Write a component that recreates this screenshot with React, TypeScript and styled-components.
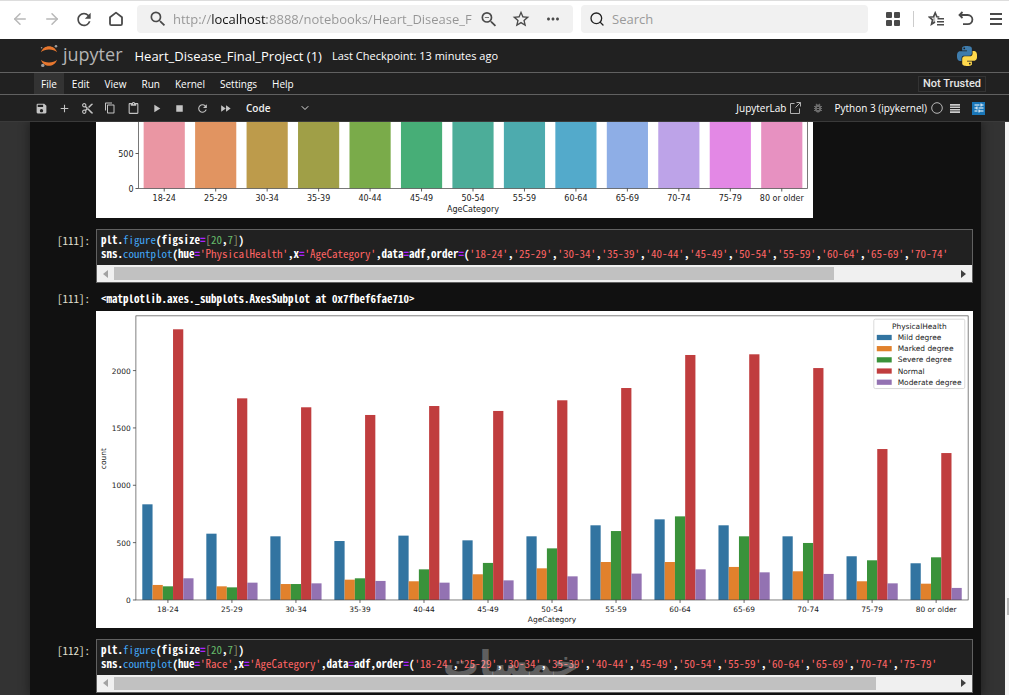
import React from "react";
import styled, { createGlobalStyle } from "styled-components";
import {
  MdAdd,
  MdBugReport,
  MdContentCopy,
  MdContentCut,
  MdContentPaste,
  MdFastForward,
  MdMoreHoriz,
  MdPlayArrow,
  MdRefresh,
  MdSave,
  MdSearch,
  MdStarOutline,
  MdStop,
  MdTune,
  MdZoomOut,
} from "react-icons/md";
import { ArrowLeft, ArrowRight, ChevronDown, Search } from "lucide-react";

const ui = `"Open Sans", "Noto Sans", sans-serif`;
const mono = `"Noto Sans Mono CJK SC", "Liberation Mono", monospace`;

const GlobalStyle = createGlobalStyle`
  *, *::before, *::after { box-sizing: border-box; }
  body { margin: 0; background: #111111; font-family: ${ui}; }
  button, input, select { font-family: inherit; margin: 0; }
`;

const Page = styled.div`
  display: flex;
  flex-direction: column;
  height: 100vh;
  overflow: hidden;
`;

/* Browser bar */

const BrowserBar = styled.header`
  display: flex;
  align-items: center;
  flex: none;
  height: 39px;
  padding: 0 3px 2px 10px;
  background: #ffffff;
  border-top: 1px solid #dddddd;
`;

const IconButton = styled.button<{ $color?: string; $width?: number }>`
  display: flex;
  flex: none;
  align-items: center;
  justify-content: center;
  width: ${(p) => p.$width ?? 20}px;
  height: 20px;
  padding: 0;
  border: 0;
  background: none;
  color: ${(p) => p.$color ?? "#4a4a4a"};
`;

const NavButtons = styled.nav`
  display: flex;
  gap: 12px;
  margin-right: 11px;
`;

const AddressBox = styled.div`
  display: flex;
  flex: 415 1 0;
  align-items: center;
  gap: 12px;
  height: 28px;
  min-width: 0;
  padding: 0 10px 0 11px;
  border-radius: 4px;
  background: #f1f1f1;
`;

const AddressInput = styled.input`
  flex: 1;
  min-width: 0;
  margin-left: -7px;
  margin-right: -6px;
  padding: 0;
  border: 0;
  font-size: 13px;
  font-weight: 400;
  line-height: 20px;
  color: transparent;
  background: linear-gradient(90deg, #949494 0 39px, #111111 39px 94px, #949494 94px);
  -webkit-background-clip: text;
  background-clip: text;
`;

const SearchBox = styled.label`
  display: flex;
  flex: 271 1 0;
  align-items: center;
  gap: 7px;
  height: 28px;
  min-width: 0;
  margin-left: 8px;
  padding: 0 8px;
  border-radius: 4px;
  background: #f1f1f1;
  color: #222222;
`;

const SearchInput = styled.input`
  flex: 1;
  min-width: 0;
  padding: 0;
  border: 0;
  background: none;
  font-size: 13px;
  line-height: 20px;
  &::placeholder { color: #9a9a9a; }
`;

const BrowserTools = styled.div`
  display: flex;
  align-items: center;
  gap: 10px;
  margin-left: 15px;
`;

const Divider = styled.span`
  width: 1px;
  height: 16px;
  margin: 0 2px 0 0;
  background: #cccccc;
`;

/* Jupyter header */

const TitleBar = styled.div`
  display: flex;
  flex: none;
  align-items: center;
  height: 34px;
  padding: 0 32px 0 39px;
  background: #212121;
  border-bottom: 1px solid #616161;
  color: #ffffff;
`;

const Brand = styled.a`
  display: flex;
  align-items: center;
  gap: 4px;
  margin-right: 12px;
  color: #b4b4b4;
  text-decoration: none;
`;

const BrandName = styled.span`
  font-size: 18px;
  line-height: 24px;
  margin-bottom: 4px;
`;

const NotebookName = styled.h1`
  margin: 0 10px 0 0;
  font-size: 13px;
  font-weight: 500;
  line-height: 20px;
`;

const Checkpoint = styled.span`
  flex: 1;
  font-size: 11px;
  font-weight: 400;
  line-height: 20px;
`;

const MenuBar = styled.nav`
  display: flex;
  flex: none;
  align-items: center;
  gap: 1px;
  height: 22px;
  padding: 0 23px 0 34px;
  background: #212121;
  border-bottom: 1px solid #616161;
`;

const MenuItem = styled.button<{ $active?: boolean }>`
  height: 21px;
  padding: 0 7px;
  border: 0;
  background: ${(p) => (p.$active ? "#333333" : "none")};
  color: #ffffff;
  font-size: 10px;
  font-weight: 400;
  line-height: 20px;
`;

const TrustButton = styled.button`
  height: 16px;
  margin-left: auto;
  padding: 0 4px;
  border: 1px solid #333333;
  background: none;
  color: #e6e6e6;
  font-family: Roboto, sans-serif;
  font-size: 11px;
  font-weight: 500;
  line-height: 14px;
`;

const ToolBar = styled.div`
  display: flex;
  flex: none;
  align-items: center;
  height: 27px;
  padding: 0 24px 0 31px;
  background: #212121;
  border-bottom: 1px solid #3a3a3a;
  color: #e0e0e0;
`;

const ToolGroup = styled.div`
  display: flex;
  align-items: center;
  gap: 3px;
`;

const CellTypePicker = styled.label`
  display: flex;
  align-items: center;
  margin-left: 11px;
`;

const CellTypeSelect = styled.select`
  appearance: none;
  width: 53px;
  padding: 0;
  border: 0;
  background: none;
  color: #f0f0f0;
  font-size: 10px;
  font-weight: 600;
  line-height: 16px;
`;

const KernelGroup = styled.div`
  display: flex;
  align-items: center;
  margin-left: auto;
`;

const TextButton = styled.button`
  display: flex;
  align-items: center;
  gap: 4px;
  padding: 0;
  border: 0;
  background: none;
  color: #ffffff;
  font-size: 10px;
  font-weight: 500;
  line-height: 16px;
`;

const InspectorButton = styled.button`
  display: flex;
  align-items: center;
  justify-content: center;
  width: 13px;
  height: 13px;
  margin-left: 5px;
  padding: 0;
  border: 0;
  background: #1976b8;
  color: #ffffff;
`;

/* Notebook */

const Workspace = styled.main`
  display: flex;
  flex: 1;
  min-height: 0;
  padding-left: 30px;
  background: #333333;
  overflow: hidden;
`;

const Paper = styled.div`
  flex: 1;
  min-width: 0;
  padding-right: 8px;
  background: #111111;
  box-shadow: 0 0 10px 1px rgba(0, 0, 0, 0.4);
`;

const PageScroll = styled.div`
  display: flex;
  flex: none;
  justify-content: flex-end;
  align-items: flex-end;
  width: 4px;
  margin-left: 24px;
  padding-bottom: 80px;
  background: #f4f4f4;
`;

const PageThumb = styled.span`
  width: 2px;
  height: 17px;
  background: #b8b8b8;
`;

const CellRow = styled.section<{ $gap: number }>`
  display: grid;
  grid-template-columns: 60px minmax(0, 1fr);
  column-gap: 6px;
  margin-bottom: ${(p) => p.$gap}px;
`;

const Prompt = styled.div`
  padding-top: 4px;
  color: #e0e0d0;
  font-family: ${mono};
  font-size: 11px;
  line-height: 14px;
  text-align: right;
  white-space: pre;
`;

const Editor = styled.div`
  position: relative;
  border: 1px solid #616161;
  background: #212121;
`;

const CodeView = styled.pre`
  margin: 0;
  padding: 2px 0 5px 4px;
  overflow: hidden;
  color: #ffffff;
  font-family: ${mono};
  font-size: 11px;
  font-weight: 700;
  line-height: 14px;
`;

const tokenColors = {
  fn: "#42a5f5",
  op: "#aa22ff",
  num: "#66bb6a",
  str: "#ff6464",
  br: "#9a9a78",
};

const Token = styled.span<{ $kind: keyof typeof tokenColors }>`
  color: ${(p) => tokenColors[p.$kind]};
  font-weight: ${(p) => (p.$kind === "op" ? 700 : 400)};
`;

const ScrollTrack = styled.div`
  display: flex;
  align-items: center;
  justify-content: space-between;
  height: 17px;
  padding: 0 6px;
  background: #f0f0f0;
`;

const ThumbLane = styled.div`
  flex: 1;
  height: 13px;
  margin: 0 5px 0 6px;
`;

const ScrollThumb = styled.div`
  height: 13px;
  background: #c1c1c1;
`;

const OutputRow = styled.div`
  display: grid;
  grid-template-columns: 60px minmax(0, 1fr);
  column-gap: 6px;
`;

const OutputText = styled.pre`
  margin: 0;
  padding: 4px 0 6px 5px;
  color: #ffffff;
  font-family: ${mono};
  font-size: 11px;
  font-weight: 700;
  line-height: 14px;
`;

const Cell = styled.div`
  margin-bottom: 11px;
`;

const FigureOutput = styled.div`
  padding-left: 66px;
`;

const Figure = styled.svg<{ $max?: number }>`
  display: block;
  width: 100%;
  max-width: ${(p) => (p.$max ? `${p.$max}px` : "none")};
  height: auto;
  background: #ffffff;
  font-family: "DejaVu Sans", sans-serif;
`;

const Watermark = styled.span`
  position: absolute;
  top: 8px;
  left: 346px;
  height: 27px;
  overflow: hidden;
  color: rgba(255, 255, 255, 0.3);
  font-family: "DejaVu Sans", sans-serif;
  font-size: 36px;
  font-weight: 700;
  line-height: 32px;
`;

/* Data */

const ages = [
  "18-24", "25-29", "30-34", "35-39", "40-44", "45-49", "50-54",
  "55-59", "60-64", "65-69", "70-74", "75-79", "80 or older",
];

const ageColors = [
  "#ea96a3", "#e19461", "#bd9b4b", "#a09f47", "#7aab4a", "#47ae77", "#4cad99",
  "#4dabae", "#53aacb", "#8eaee6", "#bda3e8", "#e388e5", "#e791c1",
];

const health = [
  { name: "Mild degree", color: "#3274a1", counts: [834, 578, 555, 514, 561, 520, 555, 651, 703, 651, 555, 381, 320] },
  { name: "Marked degree", color: "#e1812c", counts: [131, 119, 139, 177, 163, 224, 276, 331, 331, 288, 250, 163, 142] },
  { name: "Severe degree", color: "#3a923a", counts: [119, 110, 139, 189, 267, 323, 450, 601, 729, 555, 497, 346, 372] },
  { name: "Normal", color: "#c03d3e", counts: [2360, 1758, 1680, 1613, 1691, 1648, 1741, 1848, 2136, 2142, 2022, 1316, 1281] },
  { name: "Moderate degree", color: "#9372b2", counts: [189, 151, 145, 166, 151, 171, 206, 230, 267, 241, 227, 145, 105] },
];

/* Charts */

function AgeChart() {
  const left = 42.5;
  const right = 711.5;
  const base = 66.5;
  const step = (right - left) / ages.length;
  return (
    <Figure viewBox="0 0 717 96" $max={717} role="img" aria-label="Count by AgeCategory">
      {ages.map((age, i) => (
        <rect key={age} x={left + step * (i + 0.1)} y={0} width={step * 0.8} height={base} fill={ageColors[i]} />
      ))}
      <path d={`M${left} 0V${base}H${right}V0`} fill="none" stroke="#555" strokeWidth={0.8} />
      <g fontSize={8} fill="#222">
        {[{ v: "500", y: 31.5 }, { v: "0", y: base }].map((t) => (
          <g key={t.v}>
            <path d={`M${left - 3} ${t.y}H${left}`} stroke="#333" strokeWidth={0.8} />
            <text x={left - 5} y={t.y + 3} textAnchor="end">{t.v}</text>
          </g>
        ))}
        {ages.map((age, i) => {
          const x = left + step * (i + 0.5);
          return (
            <g key={age}>
              <path d={`M${x} ${base}v3`} stroke="#333" strokeWidth={0.8} />
              <text x={x} y={79} textAnchor="middle">{age}</text>
            </g>
          );
        })}
        <text x={377} y={90} textAnchor="middle">AgeCategory</text>
      </g>
    </Figure>
  );
}

function HealthChart() {
  const left = 53.5;
  const top = 6.5;
  const width = 1116;
  const base = 387.5;
  const unit = 0.1538;
  const step = width / ages.length;
  const bar = (step * 0.8) / health.length;
  return (
    <Figure viewBox="0 0 1176 425" role="img" aria-label="PhysicalHealth count by AgeCategory">
      {health.map((series, s) =>
        series.counts.map((n, i) => (
          <rect
            key={`${series.name}-${ages[i]}`}
            x={left + step * (i + 0.1) + bar * s}
            y={base - n * unit}
            width={bar}
            height={n * unit}
            fill={series.color}
          />
        ))
      )}
      <rect x={left} y={top} width={width} height={base - top} fill="none" stroke="#444" strokeWidth={0.9} />
      <g fontSize={10} fill="#222">
        {[0, 500, 1000, 1500, 2000].map((v) => (
          <g key={v}>
            <path d={`M${left - 4} ${base - v * unit}h4`} stroke="#333" />
            <text x={left - 7} y={base - v * unit + 4} textAnchor="end">{v}</text>
          </g>
        ))}
        {ages.map((age, i) => {
          const x = left + step * (i + 0.5);
          return (
            <g key={age}>
              <path d={`M${x} ${base}v4`} stroke="#333" />
              <text x={x} y={403} textAnchor="middle">{age}</text>
            </g>
          );
        })}
        <text x={left + width / 2} y={417} textAnchor="middle">AgeCategory</text>
        <text transform="translate(14 198) rotate(-90)" textAnchor="middle">count</text>
        <rect x={1043} y={11} width={122} height={93} rx={2} fill="#fff" stroke="#ccc" />
        <text x={1104} y={24} textAnchor="middle">PhysicalHealth</text>
        {health.map((series, s) => (
          <g key={series.name}>
            <rect x={1047} y={32 + s * 15} width={20} height={7} fill={series.color} />
            <text x={1075} y={39 + s * 15}>{series.name}</text>
          </g>
        ))}
      </g>
    </Figure>
  );
}

/* Icons */

const HomeIcon = () => (
  <svg width="16" height="16" viewBox="0 0 16 16" fill="none" stroke="currentColor" strokeWidth="1.8" strokeLinejoin="round">
    <path d="M2 6.2 8 1.6l6 4.6v6.6a1.4 1.4 0 0 1-1.4 1.4H3.4A1.4 1.4 0 0 1 2 12.8z" />
  </svg>
);

const GridIcon = () => (
  <svg width="14" height="14" viewBox="0 0 14 14" fill="currentColor">
    <rect x="0" y="0" width="6" height="6" rx="1" />
    <rect x="8" y="0" width="6" height="6" rx="1" />
    <rect x="0" y="8" width="6" height="6" rx="1" />
    <rect x="8" y="8" width="6" height="6" rx="1" />
  </svg>
);

const FavoritesIcon = () => (
  <svg width="17" height="16" viewBox="0 0 17 16" fill="none" stroke="currentColor" strokeWidth="1.6">
    <path d="M11.3 6 8.9 5.7 7.2 1.8 5.5 5.7 1.3 6.1 4.5 8.9 3.5 13.2 7 11" />
    <path d="M5.5 5.7 7.2 1.8V11L3.5 13.2 4.5 8.9z" fill="currentColor" stroke="none" opacity="0.35" />
    <path d="M9.5 7.8H16M9 10.8h7M9 13.8h7" strokeWidth="1.6" />
  </svg>
);

const UndoIcon = () => (
  <svg width="16" height="16" viewBox="0 0 16 16" fill="none" stroke="currentColor" strokeWidth="1.8">
    <path d="M4.5 1 1.5 4l3 3M1.5 4h8.3a4.6 4.6 0 0 1 0 9.2H5" />
  </svg>
);

const BurgerIcon = () => (
  <svg width="13" height="14" viewBox="0 0 13 14" fill="none" stroke="currentColor" strokeWidth="2">
    <path d="M0 2h12M0 7h12M0 12h12" />
  </svg>
);

const JupyterMark = () => (
  <svg width="20" height="24" viewBox="0 0 20 24">
    <path d="M2 8.3C4.5 0.3 15.5 0.3 18 8.3 14.5 4.6 5.5 4.6 2 8.3z" fill="#e8772e" />
    <path d="M2 15.7C4.5 23.7 15.5 23.7 18 15.7 14.5 19.4 5.5 19.4 2 15.7z" fill="#e8772e" />
    <circle cx="17" cy="2.2" r="1.3" fill="#9e9e9e" />
    <circle cx="2.6" cy="3.8" r="0.8" fill="#9e9e9e" />
    <circle cx="3.8" cy="21.4" r="1.7" fill="#9e9e9e" />
  </svg>
);

const PythonIcon = () => (
  <svg width="20" height="20" viewBox="0 0 24 24" role="img" aria-label="Python">
    <path
      fill="#3f7cac"
      d="M14.25.18l.9.2.73.26.59.3.45.32.34.34.25.34.16.33.1.3.04.26.02.2-.01.13V8.5l-.05.63-.13.55-.21.46-.26.38-.3.31-.33.25-.35.19-.35.14-.33.1-.3.07-.26.04-.21.02H8.77l-.69.05-.59.14-.5.22-.41.27-.33.32-.27.35-.2.36-.15.37-.1.35-.07.32-.04.27-.02.21v3.06H3.17l-.21-.03-.28-.07-.32-.12-.35-.18-.36-.26-.36-.36-.35-.46-.32-.59-.28-.73-.21-.88-.14-1.05-.05-1.23.06-1.22.16-1.04.24-.87.32-.71.36-.57.4-.44.42-.33.42-.24.4-.16.36-.1.32-.05.24-.01h.16l.06.01h8.16v-.83H6.18l-.01-2.75-.02-.37.05-.34.11-.31.17-.28.25-.26.31-.23.38-.2.44-.18.51-.15.58-.12.64-.1.71-.06.77-.04.84-.02 1.27.05zm-6.3 1.98l-.23.33-.08.41.08.41.23.34.33.22.41.09.41-.09.33-.22.23-.34.08-.41-.08-.41-.23-.33-.33-.22-.41-.09-.41.09z"
    />
    <path
      fill="#ffd94c"
      d="M21.1 6.11l.28.06.32.12.35.18.36.27.36.35.35.47.32.59.28.73.21.88.14 1.04.05 1.23-.06 1.23-.16 1.04-.24.86-.32.71-.36.57-.4.45-.42.33-.42.24-.4.16-.36.09-.32.05-.24.02-.16-.01h-8.22v.82h5.84l.01 2.76.02.36-.05.34-.11.31-.17.29-.25.25-.31.24-.38.2-.44.17-.51.15-.58.13-.64.09-.71.07-.77.04-.84.01-1.27-.04-1.07-.14-.9-.2-.73-.25-.59-.3-.45-.33-.34-.34-.25-.34-.16-.33-.1-.3-.04-.25-.02-.2.01-.13v-5.34l.05-.64.13-.54.21-.46.26-.38.3-.32.33-.24.35-.2.35-.14.33-.1.3-.06.26-.04.21-.02.13-.01h5.84l.69-.05.59-.14.5-.21.41-.28.33-.32.27-.35.2-.36.15-.36.1-.35.07-.32.04-.28.02-.21V6.07h2.09l.14.01zm-6.47 14.25l-.23.33-.08.41.08.41.23.33.33.23.41.08.41-.08.33-.23.23-.33.08-.41-.08-.41-.23-.33-.33-.23-.41-.08-.41.08z"
    />
  </svg>
);

const LaunchIcon = () => (
  <svg width="11" height="12" viewBox="0 0 11 12" fill="none" stroke="#b0b0b0">
    <path d="M4.5 1.5h-4v10h9v-5M6.5 0.5h4v4M10.5 0.5l-5 5" />
  </svg>
);

const KernelIdleIcon = () => (
  <svg width="12" height="12" viewBox="0 0 12 12" fill="none" stroke="#b8b8b8">
    <circle cx="6" cy="6" r="5.3" />
  </svg>
);

const LinesIcon = () => (
  <svg width="10" height="9" viewBox="0 0 10 9" fill="none" stroke="#cccccc" strokeWidth="1.6">
    <path d="M0 0.9h10M0 3.3h10M0 5.7h10M0 8.1h10" />
  </svg>
);

const ArrowHead = ({ flip, color }: { flip?: boolean; color: string }) => (
  <svg width="5" height="8" viewBox="0 0 5 8" fill={color}>
    <path d={flip ? "M5 0v8L0 4z" : "M0 0v8l5-4z"} />
  </svg>
);

/* Cells */

type CodeCellProps = {
  prompt: string;
  hue: string;
  order: string[];
  thumb: number;
  gap?: number;
  children?: React.ReactNode;
};

function CodeCell({ prompt, hue, order, thumb, gap = 11, children }: CodeCellProps) {
  return (
    <CellRow $gap={gap}>
      <Prompt>{prompt}</Prompt>
      <Editor>
        <CodeView>
          plt.<Token $kind="fn">figure</Token>(figsize<Token $kind="op">=</Token>
          <Token $kind="br">[</Token><Token $kind="num">20</Token>,<Token $kind="num">7</Token><Token $kind="br">]</Token>)
          {"\n"}sns.<Token $kind="fn">countplot</Token>(hue<Token $kind="op">=</Token>
          <Token $kind="str">'{hue}'</Token>,x<Token $kind="op">=</Token>
          <Token $kind="str">'AgeCategory'</Token>,data<Token $kind="op">=</Token>adf,order<Token $kind="op">=</Token>(
          {order.map((age, i) => (
            <React.Fragment key={age}>
              {i > 0 && ","}
              <Token $kind="str">'{age}'</Token>
            </React.Fragment>
          ))}
        </CodeView>
        {children}
        <ScrollTrack>
          <ArrowHead flip color="#a3a3a3" />
          <ThumbLane>
            <ScrollThumb style={{ width: `${thumb}%` }} />
          </ThumbLane>
          <ArrowHead color="#404040" />
        </ScrollTrack>
      </Editor>
    </CellRow>
  );
}

const menus = ["File", "Edit", "View", "Run", "Kernel", "Settings", "Help"];

const tools = [
  { label: "Save", icon: <MdSave size={13} /> },
  { label: "Insert cell", icon: <MdAdd size={13} /> },
  { label: "Cut", icon: <MdContentCut size={13} /> },
  { label: "Copy", icon: <MdContentCopy size={12} /> },
  { label: "Paste", icon: <MdContentPaste size={13} /> },
  { label: "Run cell", icon: <MdPlayArrow size={13} /> },
  { label: "Interrupt", icon: <MdStop size={13} /> },
  { label: "Restart", icon: <MdRefresh size={13} /> },
  { label: "Restart and run all", icon: <MdFastForward size={13} /> },
];

export default function App() {
  return (
    <Page>
      <GlobalStyle />
      <BrowserBar>
        <NavButtons>
          <IconButton aria-label="Back" $color="#b8b8b8"><ArrowLeft size={18} strokeWidth={2} /></IconButton>
          <IconButton aria-label="Forward" $color="#b8b8b8"><ArrowRight size={18} strokeWidth={2} /></IconButton>
          <IconButton aria-label="Reload"><MdRefresh size={21} /></IconButton>
          <IconButton aria-label="Home"><HomeIcon /></IconButton>
        </NavButtons>
        <AddressBox>
          <IconButton aria-label="Site information"><MdSearch size={20} /></IconButton>
          <AddressInput aria-label="Address" defaultValue="http://localhost:8888/notebooks/Heart_Disease_F" />
          <IconButton aria-label="Zoom out"><MdZoomOut size={21} /></IconButton>
          <IconButton aria-label="Bookmark"><MdStarOutline size={20} /></IconButton>
          <IconButton aria-label="More"><MdMoreHoriz size={18} /></IconButton>
        </AddressBox>
        <SearchBox>
          <Search size={16} strokeWidth={2} />
          <SearchInput aria-label="Search" placeholder="Search" />
        </SearchBox>
        <BrowserTools>
          <IconButton aria-label="Apps"><GridIcon /></IconButton>
          <Divider />
          <IconButton aria-label="Favorites"><FavoritesIcon /></IconButton>
          <IconButton aria-label="Undo"><UndoIcon /></IconButton>
          <IconButton aria-label="Menu"><BurgerIcon /></IconButton>
        </BrowserTools>
      </BrowserBar>

      <TitleBar>
        <Brand href="#">
          <JupyterMark />
          <BrandName>jupyter</BrandName>
        </Brand>
        <NotebookName>Heart_Disease_Final_Project (1)</NotebookName>
        <Checkpoint>Last Checkpoint: 13 minutes ago</Checkpoint>
        <PythonIcon />
      </TitleBar>

      <MenuBar>
        {menus.map((m) => (
          <MenuItem key={m} $active={m === "File"}>{m}</MenuItem>
        ))}
        <TrustButton>Not Trusted</TrustButton>
      </MenuBar>

      <ToolBar>
        <ToolGroup>
          {tools.map((t) => (
            <IconButton key={t.label} aria-label={t.label} $color="#c4c4c4">{t.icon}</IconButton>
          ))}
        </ToolGroup>
        <CellTypePicker>
          <CellTypeSelect aria-label="Cell type" defaultValue="Code">
            <option>Code</option>
          </CellTypeSelect>
          <ChevronDown size={12} strokeWidth={2} />
        </CellTypePicker>
        <KernelGroup>
          <TextButton>
            JupyterLab <LaunchIcon />
          </TextButton>
          <IconButton aria-label="Debugger" $color="#6c6c6c" $width={33}><MdBugReport size={12} /></IconButton>
          <TextButton>
            Python 3 (ipykernel) <KernelIdleIcon />
          </TextButton>
          <IconButton aria-label="Outline" $width={24}><LinesIcon /></IconButton>
          <InspectorButton aria-label="Property inspector"><MdTune size={12} /></InspectorButton>
        </KernelGroup>
      </ToolBar>

      <Workspace>
        <Paper>
          <Cell>
            <FigureOutput>
              <AgeChart />
            </FigureOutput>
          </Cell>
          <CodeCell prompt="[111]:" hue="PhysicalHealth" order={ages.slice(0, 11)} thumb={85.5} gap={4} />
          <Cell>
            <OutputRow>
              <Prompt>[111]:</Prompt>
              <OutputText>{"<matplotlib.axes._subplots.AxesSubplot at 0x7fbef6fae710>"}</OutputText>
            </OutputRow>
            <FigureOutput>
              <HealthChart />
            </FigureOutput>
          </Cell>
          <CodeCell prompt="[112]:" hue="Race" order={ages.slice(0, 12)} thumb={90.5}>
            <Watermark lang="ar">خمسات</Watermark>
          </CodeCell>
        </Paper>
        <PageScroll>
          <PageThumb />
        </PageScroll>
      </Workspace>
    </Page>
  );
}
